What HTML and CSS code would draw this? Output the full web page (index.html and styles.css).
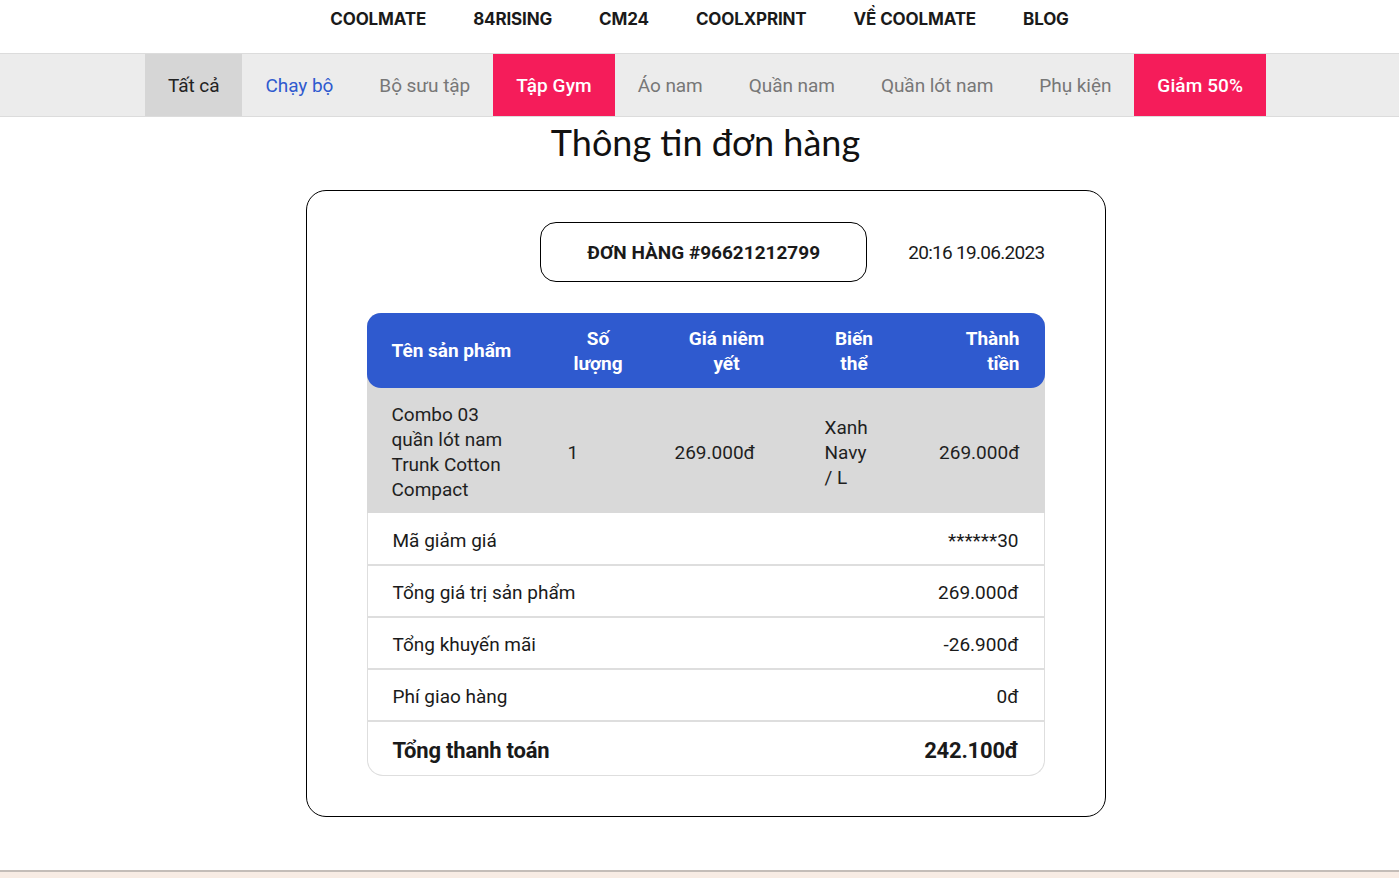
FILE: index.html
```html
<!DOCTYPE html>
<html lang="vi">
<head>
<meta charset="utf-8">
<title>Thông tin đơn hàng</title>
<link rel="stylesheet" href="styles.css">
</head>
<body>
<header class="topnav">
  <a class="topnav-item">COOLMATE</a>
  <a class="topnav-item">84RISING</a>
  <a class="topnav-item">CM24</a>
  <a class="topnav-item">COOLXPRINT</a>
  <a class="topnav-item">VỀ COOLMATE</a>
  <a class="topnav-item">BLOG</a>
</header>
<nav class="catbar">
  <a class="cat cat-active">Tất cả</a>
  <a class="cat cat-blue">Chạy bộ</a>
  <a class="cat">Bộ sưu tập</a>
  <a class="cat cat-pink">Tập Gym</a>
  <a class="cat">Áo nam</a>
  <a class="cat">Quần nam</a>
  <a class="cat">Quần lót nam</a>
  <a class="cat">Phụ kiện</a>
  <a class="cat cat-pink">Giảm 50%</a>
</nav>
<main class="main">
  <h1 class="title">Thông tin đơn hàng</h1>
  <section class="card">
    <div class="order-head">
      <div class="order-code">ĐƠN HÀNG #96621212799</div>
      <div class="order-date">20:16 19.06.2023</div>
    </div>
    <div class="products">
      <div class="grid thead">
        <div class="c c1">Tên sản phẩm</div>
        <div class="c c2">Số lượng</div>
        <div class="c c3">Giá niêm yết</div>
        <div class="c c4">Biến thể</div>
        <div class="c c5">Thành tiền</div>
      </div>
      <div class="grid trow">
        <div class="c c1">Combo 03 quần lót nam Trunk Cotton Compact</div>
        <div class="c c2">1</div>
        <div class="c c3">269.000đ</div>
        <div class="c c4">Xanh Navy / L</div>
        <div class="c c5">269.000đ</div>
      </div>
    </div>
    <div class="summary">
      <div class="srow"><span>Mã giảm giá</span><span>******30</span></div>
      <div class="srow"><span>Tổng giá trị sản phẩm</span><span>269.000đ</span></div>
      <div class="srow"><span>Tổng khuyến mãi</span><span>-26.900đ</span></div>
      <div class="srow"><span>Phí giao hàng</span><span>0đ</span></div>
      <div class="srow srow-total"><span>Tổng thanh toán</span><span>242.100đ</span></div>
    </div>
  </section>
</main>
<footer class="footer"></footer>
</body>
</html>
```
FILE: styles.css
```css
* { box-sizing: border-box; }
html, body { margin: 0; padding: 0; }
body {
  font-family: Roboto, "Liberation Sans", sans-serif;
  color: #1a1a1a;
  background: #fff;
  overflow: hidden;
}
.topnav {
  height: 54px;
  display: flex;
  justify-content: center;
  gap: 47px;
  padding-top: 8px;
  border-bottom: 1px solid #dcdcdc;
}
.topnav-item {
  font-family: Inter, sans-serif;
  font-weight: 700;
  font-size: 17px;
  line-height: 22px;
  letter-spacing: -0.15px;
  color: #1a1a1a;
}
.catbar {
  display: flex;
  justify-content: center;
  background: #ececec;
  height: 63px;
  padding-left: 12px;
  border-bottom: 1px solid #dcdcdc;
}
.cat {
  display: flex;
  align-items: center;
  padding: 0 23px;
  font-size: 19px;
  letter-spacing: -0.05px;
  color: #777;
}
.cat-active { background: #d6d6d6; color: #222; }
.cat-blue { color: #2f5acf; }
.cat-pink { background: #f51c5a; color: #fff; font-weight: 500; letter-spacing: 0.1px; }
.main {
  display: flex;
  flex-direction: column;
  align-items: center;
  padding-left: 12px;
  padding-bottom: 53px;
}
.title {
  margin: 2px 0 25px;
  font-family: Lato, sans-serif;
  font-weight: 400;
  font-size: 36px;
  line-height: 46px;
  color: #111;
}
.card {
  width: 800px;
  border: 1px solid #000;
  border-radius: 20px;
  padding: 31px 60px 40px;
}
.order-head {
  display: flex;
  justify-content: flex-end;
  align-items: center;
  gap: 41px;
  margin-bottom: 31px;
}
.order-code {
  width: 327px;
  height: 60px;
  border: 1px solid #000;
  border-radius: 16px;
  display: flex;
  align-items: center;
  justify-content: center;
  font-weight: 700;
  font-size: 19px;
}
.order-date {
  font-size: 19px;
  letter-spacing: -0.7px;
}
.products {
  background: #d9d9d9;
  border-radius: 14px 14px 0 0;
}
.grid {
  display: grid;
  grid-template-columns: 178px 107px 150px 105px 138px;
  font-size: 19px;
  line-height: 25px;
}
.thead {
  background: #2f5acf;
  color: #fff;
  font-weight: 700;
  border-radius: 14px;
  min-height: 75px;
}
.c { padding: 0 23px; display: flex; flex-direction: column; justify-content: center; }
.c1 { padding-left: 25px; padding-right: 28px; }
.c4 { padding-right: 34px; }
.c5 { padding-right: 25px; text-align: right; }
.thead .c { text-align: center; }
.thead .c1 { text-align: left; }
.thead .c3 { padding: 0 30px; }
.thead .c4 { padding: 0 23px; }
.thead .c5 { text-align: right; padding-left: 50px; }
.trow { padding: 14px 0 11px; color: #1f1f1f; }
.summary {
  border: 1px solid #dedede;
  border-top: 0;
  border-radius: 0 0 16px 16px;
}
.srow {
  display: flex;
  justify-content: space-between;
  align-items: center;
  height: 52px;
  padding: 3px 25px 0;
  border-top: 2px solid #dedede;
  font-size: 19px;
}
.srow:first-child { border-top: 0; height: 51px; }
.srow-total {
  font-weight: 700;
  font-size: 22px;
  letter-spacing: -0.2px;
  height: 55px;
}
.footer {
  border-top: 2px solid #c4bdb8;
  background: #f8ece4;
  height: 40px;
}
```
